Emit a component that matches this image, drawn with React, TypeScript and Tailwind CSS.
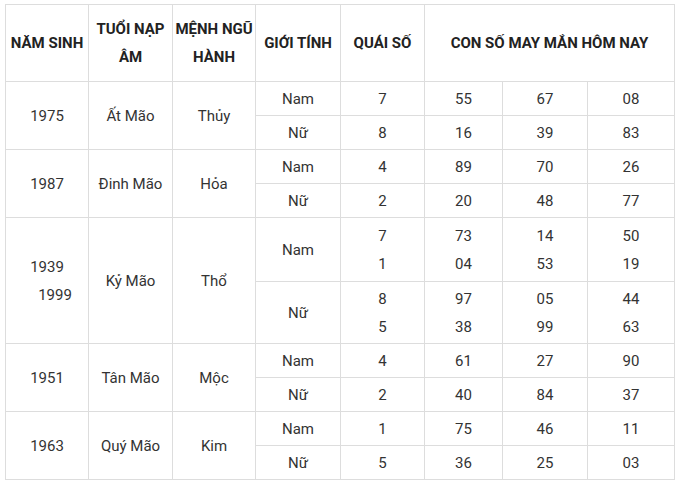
import React from 'react';

type Sub = { gender: string; quai: string[]; nums: string[][] };
type Row = { years: string[]; napAm: string; menh: string; subs: Sub[]; tall?: boolean };

const rows: Row[] = [
  {
    years: ['1975'],
    napAm: 'Ất Mão',
    menh: 'Thủy',
    subs: [
      { gender: 'Nam', quai: ['7'], nums: [['55'], ['67'], ['08']] },
      { gender: 'Nữ', quai: ['8'], nums: [['16'], ['39'], ['83']] },
    ],
  },
  {
    years: ['1987'],
    napAm: 'Đinh Mão',
    menh: 'Hỏa',
    subs: [
      { gender: 'Nam', quai: ['4'], nums: [['89'], ['70'], ['26']] },
      { gender: 'Nữ', quai: ['2'], nums: [['20'], ['48'], ['77']] },
    ],
  },
  {
    years: ['1939', '1999'],
    napAm: 'Kỷ Mão',
    menh: 'Thổ',
    tall: true,
    subs: [
      { gender: 'Nam', quai: ['7', '1'], nums: [['73', '04'], ['14', '53'], ['50', '19']] },
      { gender: 'Nữ', quai: ['8', '5'], nums: [['97', '38'], ['05', '99'], ['44', '63']] },
    ],
  },
  {
    years: ['1951'],
    napAm: 'Tân Mão',
    menh: 'Mộc',
    subs: [
      { gender: 'Nam', quai: ['4'], nums: [['61'], ['27'], ['90']] },
      { gender: 'Nữ', quai: ['2'], nums: [['40'], ['84'], ['37']] },
    ],
  },
  {
    years: ['1963'],
    napAm: 'Quý Mão',
    menh: 'Kim',
    subs: [
      { gender: 'Nam', quai: ['1'], nums: [['75'], ['46'], ['11']] },
      { gender: 'Nữ', quai: ['5'], nums: [['36'], ['25'], ['03']] },
    ],
  },
];

const cell = 'border border-[#dddddd] text-center align-middle p-0 leading-[28px]';
const head = 'border border-[#dddddd] text-center align-middle p-0 leading-[28px] font-bold text-[#222222]';

function Lines({ items }: { items: string[] }) {
  return (
    <>
      {items.map((t, i) => (
        <div key={i}>{t}</div>
      ))}
    </>
  );
}

export default function App() {
  return (
    <div className="bg-white w-[680px] h-[487px] pt-[4px] pl-[5px] font-['Roboto','Liberation_Sans',sans-serif] text-[15px] text-[#333333]">
      <table className="table-fixed border-collapse w-[669px]">
        <colgroup>
          <col className="w-[83px]" />
          <col className="w-[84px]" />
          <col className="w-[83px]" />
          <col className="w-[85px]" />
          <col className="w-[84px]" />
          <col className="w-[78px]" />
          <col className="w-[85px]" />
          <col className="w-[87px]" />
        </colgroup>
        <thead>
          <tr className="h-[77px]">
            <th className={head}>NĂM SINH</th>
            <th className={head}>
              TUỔI NẠP
              <br />
              ÂM
            </th>
            <th className={head}>
              MỆNH NGŨ
              <br />
              HÀNH
            </th>
            <th className={head}>GIỚI TÍNH</th>
            <th className={head}>QUÁI SỐ</th>
            <th className={head} colSpan={3}>
              CON SỐ MAY MẮN HÔM NAY
            </th>
          </tr>
        </thead>
        <tbody>
          {rows.map((r) =>
            r.subs.map((s, si) => (
              <tr
                key={r.napAm + s.gender}
                className={r.tall ? (si === 0 ? 'h-[64px]' : 'h-[62px]') : 'h-[34px]'}
              >
                {si === 0 && (
                  <>
                    <td className={cell} rowSpan={2}>
                      {r.years.map((y, i) => (
                        <div key={y} className={i > 0 ? 'pl-[16px]' : ''}>
                          {y}
                        </div>
                      ))}
                    </td>
                    <td className={cell} rowSpan={2}>
                      {r.napAm}
                    </td>
                    <td className={cell} rowSpan={2}>
                      {r.menh}
                    </td>
                  </>
                )}
                <td className={cell}>{s.gender}</td>
                <td className={cell}>
                  <Lines items={s.quai} />
                </td>
                {s.nums.map((n, ni) => (
                  <td key={ni} className={cell}>
                    <Lines items={n} />
                  </td>
                ))}
              </tr>
            ))
          )}
        </tbody>
      </table>
    </div>
  );
}
